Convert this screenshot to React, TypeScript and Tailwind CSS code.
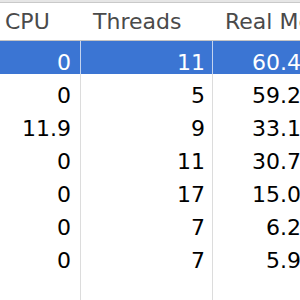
const rows = [
  { cpu: "0", threads: "11", mem: "60.4" },
  { cpu: "0", threads: "5", mem: "59.2" },
  { cpu: "11.9", threads: "9", mem: "33.1" },
  { cpu: "0", threads: "11", mem: "30.7" },
  { cpu: "0", threads: "17", mem: "15.0" },
  { cpu: "0", threads: "7", mem: "6.2" },
  { cpu: "0", threads: "7", mem: "5.9" },
];

export default function App() {
  return (
    <div
      className="h-[300px] w-[300px] overflow-hidden bg-white"
      style={{ fontFamily: '"DejaVu Sans", Verdana, sans-serif' }}
    >
      <div className="h-[3px] border-b border-[#c9c9c9] bg-[#e6e6e6]" />
      <div className="-ml-[7px] w-[440px]">
        {/* header */}
        <div className="flex h-[38px] items-center border-b border-[#c4c4c4] text-[22px] text-[#4a4a4a]">
          <div className="w-[88px] pl-[12px]">CPU</div>
          <div className="w-[132px] pl-[12px]">Threads</div>
          <div className="w-[140px] pl-[12px] whitespace-nowrap">Real Mem</div>
        </div>
        {rows.map((r, i) => {
          const sel = i === 0;
          return (
            <div
              key={i}
              className={`flex h-[33px] items-center text-[22px] ${
                sel ? "bg-[#3b75d3] text-white" : "text-black"
              }`}
            >
              <div
                className={`flex h-full w-[88px] items-center justify-end border-r pt-[10px] pr-[9px] ${
                  sel ? "border-[#c3d3ef]" : "border-[#dcdcdc]"
                }`}
              >
                {r.cpu}
              </div>
              <div
                className={`flex h-full w-[132px] items-center justify-end border-r pt-[10px] pr-[7px] ${
                  sel ? "border-[#c3d3ef]" : "border-[#dcdcdc]"
                }`}
              >
                {r.threads}
              </div>
              <div className="flex h-full w-[140px] items-center justify-end pt-[10px] pr-[52px]">
                {r.mem}
              </div>
            </div>
          );
        })}
        <div className="flex h-[40px]">
          <div className="h-full w-[88px] border-r border-[#dcdcdc]" />
          <div className="h-full w-[132px] border-r border-[#dcdcdc]" />
        </div>
      </div>
    </div>
  );
}
